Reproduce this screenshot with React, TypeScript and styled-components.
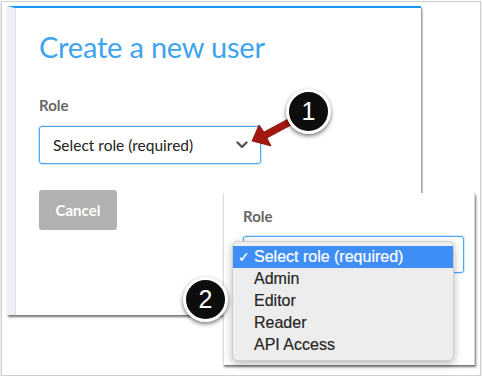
import React from 'react';
import styled, { createGlobalStyle } from 'styled-components';

const GlobalStyle = createGlobalStyle`
  html, body {
    margin: 0;
    padding: 0;
    background: #ffffff;
  }
  body {
    font-family: Lato, "Open Sans", sans-serif;
  }
`;

const ROLES = ['Select role (required)', 'Admin', 'Editor', 'Reader', 'API Access'];

const Frame = styled.div`
  position: relative;
  box-sizing: border-box;
  width: 480px;
  height: 375px;
  margin: 1px 0 0 1px;
  border: 1px solid #cfcfcf;
  box-shadow: 0 1px 2px rgba(0, 0, 0, 0.25);
  background: #fff;
  overflow: hidden;
`;

const MainPanel = styled.section`
  box-sizing: border-box;
  width: 414px;
  height: 309px;
  margin: 4px 0 0 5px;
  display: flex;
  flex-direction: column;
  align-items: flex-start;
  padding: 21px 0 0 24px;
  background: #fff;
  border-top: 2px solid #1797f2;
  border-left: 8px solid #edf1f5;
  box-shadow: 1px 2px 2px rgba(0, 0, 0, 0.55), inset 1px 0 0 #dfe4ea;
`;

const Title = styled.h1`
  margin: 0 0 32px;
  font-family: Lato, sans-serif;
  font-weight: 400;
  font-size: 29px;
  line-height: 35px;
  color: #3ea4f0;
  letter-spacing: -0.2px;
`;

const Label = styled.label<{ $gap: number }>`
  display: block;
  margin: 0 0 ${(p) => p.$gap}px;
  font-family: Lato, sans-serif;
  font-weight: 700;
  font-size: 15px;
  line-height: 18px;
  color: #666;
`;

const SelectBox = styled.div<{ $width: number; $height: number }>`
  box-sizing: border-box;
  width: ${(p) => p.$width}px;
  height: ${(p) => p.$height}px;
  display: flex;
  align-items: center;
  justify-content: space-between;
  padding: 0 12px 0 13px;
  border: 1px solid #4ba6f2;
  border-radius: 3px;
  box-shadow: 0 0 0 1px rgba(75, 166, 242, 0.25);
  background: #fff;
  font-family: Lato, sans-serif;
  font-size: 15.5px;
  color: #222;
`;

const CancelButton = styled.button`
  margin-top: 26px;
  width: 78px;
  height: 40px;
  border: none;
  border-radius: 3px;
  background: #b1b1b1;
  color: #fff;
  font-family: Lato, sans-serif;
  font-weight: 700;
  font-size: 15px;
  padding: 0;
`;

const DetailPanel = styled.section`
  position: absolute;
  left: 221px;
  top: 191px;
  box-sizing: border-box;
  width: 252px;
  height: 172px;
  padding: 14px 0 0 19px;
  background: #fff;
  border-left: 1px solid #dcdcdc;
  border-right: 1px solid #d6d6d6;
  box-shadow: 1px 2px 2px rgba(0, 0, 0, 0.55);
`;

const Menu = styled.ul`
  position: absolute;
  left: 8px;
  top: 48px;
  box-sizing: border-box;
  width: 222px;
  margin: 0;
  padding: 4px 0;
  list-style: none;
  background: #ededed;
  border: 1px solid #cdcdcd;
  border-radius: 5px;
  box-shadow: 0 3px 8px rgba(0, 0, 0, 0.28);
  font-family: "Liberation Sans", Arial, sans-serif;
  font-size: 16px;
`;

const MenuItem = styled.li<{ $active?: boolean }>`
  display: flex;
  align-items: center;
  height: 22px;
  padding-left: 5px;
  background: ${(p) => (p.$active ? '#3f8ef6' : 'transparent')};
  color: ${(p) => (p.$active ? '#fff' : '#262626')};
  -webkit-text-stroke: 0.2px currentColor;
`;

const Check = styled.span`
  width: 16px;
  font-size: 14px;
`;

const Badge = styled.div<{ $x: number; $y: number }>`
  position: absolute;
  left: ${(p) => p.$x}px;
  top: ${(p) => p.$y}px;
  box-sizing: border-box;
  width: 45px;
  height: 45px;
  display: flex;
  align-items: center;
  justify-content: center;
  border-radius: 50%;
  background: #0d0d0d;
  border: 3px solid #fff;
  box-shadow: 0 2px 4px rgba(0, 0, 0, 0.55);
  color: #fff;
  font-family: "Liberation Sans", Arial, sans-serif;
  font-size: 25px;
`;

const Overlay = styled.svg`
  position: absolute;
  left: 0;
  top: 0;
  pointer-events: none;
`;

const Chevron = () => (
  <svg width="12" height="8" viewBox="0 0 12 8">
    <path d="M1.5 1.5 L6 6 L10.5 1.5" fill="none" stroke="#555" strokeWidth="2.4" strokeLinecap="round" strokeLinejoin="round" />
  </svg>
);

export default function App() {
  return (
    <>
      <GlobalStyle />
      <Frame>
        <MainPanel>
          <Title>Create a new user</Title>
          <Label $gap={12}>Role</Label>
          <SelectBox $width={222} $height={38}>
            <span>Select role (required)</span>
            <Chevron />
          </SelectBox>
          <CancelButton>Cancel</CancelButton>
        </MainPanel>

        <DetailPanel>
          <Label $gap={11}>Role</Label>
          <SelectBox $width={221} $height={37} />
          <Menu>
            {ROLES.map((r, i) => (
              <MenuItem key={r} $active={i === 0}>
                <Check>{i === 0 ? '✓' : ''}</Check>
                {r}
              </MenuItem>
            ))}
          </Menu>
        </DetailPanel>

        <Overlay width="478" height="373">
          <path
            d="M250 139 L257 123 L262 130 L288 116 L291 122 L265 136 L269 144 Z"
            fill="#a3170f"
            stroke="#7c0f08"
            strokeWidth="0.8"
            strokeLinejoin="round"
          />
        </Overlay>
        <Badge $x={284} $y={87}>1</Badge>
        <Badge $x={181} $y={275}>2</Badge>
      </Frame>
    </>
  );
}
